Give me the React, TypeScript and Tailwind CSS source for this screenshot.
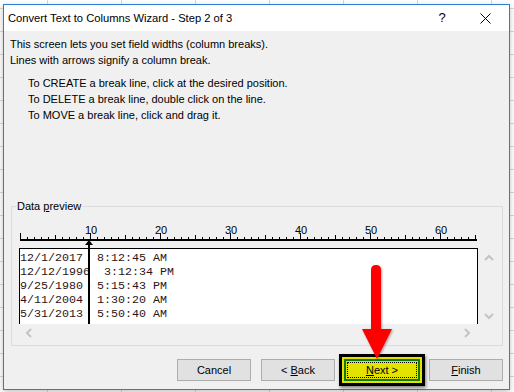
import React from 'react';

const rows = [
  '12/1/2017  8:12:45 AM',
  '12/12/1996  3:12:34 PM',
  '9/25/1980  5:15:43 PM',
  '4/11/2004  1:30:20 AM',
  '5/31/2013  5:50:40 AM',
];

function Ruler() {
  const ticks = Array.from({ length: 66 }, (_, i) => i);
  return (
    <svg width="470" height="26" className="block">
      <rect x="1" y="17" width="457" height="2" fill="#000" />
      {ticks.map((i) => {
        const h = i % 10 === 0 ? 6 : i % 5 === 0 ? 4 : 2;
        return <rect key={i} x={1 + i * 7} y={17 - h} width="1" height={h} fill="#000" />;
      })}
      {[10, 20, 30, 40, 50, 60].map((n) => (
        <text
          key={n}
          x={2 + n * 7}
          y="12"
          textAnchor="middle"
          fontSize="11"
          fontFamily="Liberation Sans, Arial, sans-serif"
          fill="#000"
        >
          {n}
        </text>
      ))}
    </svg>
  );
}

function Chevron({ dir }: { dir: 'up' | 'down' | 'left' | 'right' }) {
  const paths = {
    up: 'M1 6 L5 2 L9 6',
    down: 'M1 2 L5 6 L9 2',
    left: 'M6 1 L2 5 L6 9',
    right: 'M2 1 L6 5 L2 9',
  };
  const vertical = dir === 'up' || dir === 'down';
  return (
    <svg width={vertical ? 10 : 8} height={vertical ? 8 : 10} className="block">
      <path d={paths[dir]} fill="none" stroke="#c4c4c4" strokeWidth="2" />
    </svg>
  );
}

function Btn({ children }: { children: React.ReactNode }) {
  return (
    <div className="w-[74px] h-[22px] border border-[#adadad] bg-[#e1e1e1] flex items-center justify-center text-[11px] text-black">
      {children}
    </div>
  );
}

export default function App() {
  return (
    <div
      className="relative w-[514px] h-[392px] overflow-hidden bg-white pl-[3px] pt-[4px] bg-[linear-gradient(to_right,#d9d9d9_1px,transparent_1px),linear-gradient(to_bottom,#d9d9d9_1px,transparent_1px)] bg-[length:74px_23px] bg-[position:47px_8px]"
      style={{ fontFamily: '"Liberation Sans", Arial, sans-serif' }}
    >
      {/* dialog window */}
      <div className="w-[507px] h-[386px] border border-[#2a7fd4] bg-[#f0f0f0] flex flex-col shadow-[0_2px_6px_rgba(0,0,0,0.25)]">
        {/* title bar */}
        <div className="h-[26px] bg-white flex items-center pl-[4px] text-[11.2px] text-black">
          <span className="flex-1">Convert Text to Columns Wizard - Step 2 of 3</span>
          <span className="w-[20px] text-center text-[13px] mr-[28px]">?</span>
          <svg width="11" height="11" className="mr-[18px]">
            <path d="M0.5 0.5 L10.5 10.5 M10.5 0.5 L0.5 10.5" stroke="#000" strokeWidth="1" />
          </svg>
        </div>

        {/* body */}
        <div className="flex-1 flex flex-col text-[11px] text-black leading-[16px]">
          <div className="pl-[6px] pt-[5px]">
            <div>This screen lets you set field widths (column breaks).</div>
            <div>Lines with arrows signify a column break.</div>
          </div>
          <div className="pl-[24px] mt-[7px]">
            <div>To CREATE a break line, click at the desired position.</div>
            <div>To DELETE a break line, double click on the line.</div>
            <div>To MOVE a break line, click and drag it.</div>
          </div>

          {/* data preview group */}
          <div className="relative ml-[7px] mt-[83px] w-[492px] h-[140px] border border-[#dcdcdc] pt-[15px] pl-[7px]">
            <span className="absolute left-[4px] top-[-9px] bg-[#f0f0f0] px-[1px] leading-[16px]">
              Data <span className="underline">p</span>review
            </span>
            <Ruler />
            <div className="relative grid grid-cols-[459px_19px] grid-rows-[76px_17px] w-[478px]">
              <div className="bg-white border-l border-t border-r border-black pt-[2px] overflow-hidden">
                {rows.map((r) => (
                  <div
                    key={r}
                    className="whitespace-pre text-[11.67px] leading-[14px] text-[#2e1414]"
                    style={{ fontFamily: '"Liberation Mono", "Courier New", monospace' }}
                  >
                    {r}
                  </div>
                ))}
              </div>
              <div className="flex flex-col items-center justify-between pt-[6px] pb-[4px] pl-[2px]">
                <Chevron dir="up" />
                <Chevron dir="down" />
              </div>
              <div className="flex items-center justify-between pl-[6px] pr-[7px]">
                <Chevron dir="left" />
                <Chevron dir="right" />
              </div>
              <div />
              {/* column break marker */}
              <div className="absolute left-[69px] top-[-7px] h-[83px] w-[2px] bg-black" />
              <svg width="8" height="5" className="absolute left-[66px] top-[-8px]">
                <path d="M4 0 L8 5 L0 5 Z" fill="#000" />
              </svg>
            </div>
          </div>

          {/* buttons */}
          <div className="flex justify-end items-center gap-[10px] pr-[6px] mt-[13px]">
            <Btn>Cancel</Btn>
            <Btn>
              &lt;&nbsp;<span className="underline">B</span>ack
            </Btn>
            <div className="relative w-[74px] h-[22px]">
              <div className="absolute left-[-6px] top-[-5px] w-[86px] h-[32px] border-[3px] border-black bg-[#e3e300] p-[2px] shadow-[1px_2px_3px_rgba(0,0,0,0.45)]">
                <div className="w-full h-full border-2 border-[#137a13] p-[1px]">
                  <div className="w-full h-full border border-dotted border-black flex items-center justify-center text-[11px]">
                    <span className="underline">N</span>ext &gt;
                  </div>
                </div>
              </div>
            </div>
            <Btn>
              <span className="underline">F</span>inish
            </Btn>
          </div>
        </div>
      </div>

      {/* red annotation arrow */}
      <svg width="514" height="392" className="absolute left-0 top-0 pointer-events-none">
        <defs>
          <filter id="sh" x="-20%" y="-20%" width="140%" height="140%">
            <feDropShadow dx="1" dy="1" stdDeviation="1" floodOpacity="0.35" />
          </filter>
        </defs>
        <g filter="url(#sh)">
          <path d="M371 270 Q371 265 376 265 Q381 265 381 270 L381 331 L371 331 Z" fill="#ff0000" />
          <path d="M362 329 L392 329 L377 359 Z" fill="#ff0000" />
        </g>
      </svg>
    </div>
  );
}
